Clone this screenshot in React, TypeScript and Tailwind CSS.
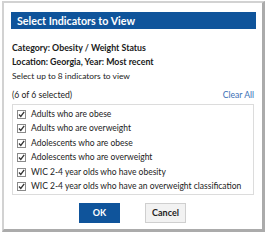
import React from "react"

const items = [
  "Adults who are obese",
  "Adults who are overweight",
  "Adolescents who are obese",
  "Adolescents who are overweight",
  "WIC 2-4 year olds who have obesity",
  "WIC 2-4 year olds who have an overweight classification",
]

function Check() {
  return (
    <svg width="9" height="9" viewBox="0 0 9 9" className="shrink-0">
      <rect x="0.5" y="0.5" width="8" height="8" fill="#fff" stroke="#8a8a8a" />
      <path d="M2 4.5 L3.8 6.5 L7.2 1.8" fill="none" stroke="#333" strokeWidth="1.3" />
    </svg>
  )
}

export default function App() {
  return (
    <div className="w-[269px] h-[236px] bg-white pl-[2px] pt-[1px]" style={{ fontFamily: "Lato, 'Open Sans', sans-serif" }}>
      <div className="w-[263px] h-[231px] border-l-2 border-t-2 border-r-[3px] border-b-[3px] border-l-[#d2d2d2] border-t-[#d2d2d2] border-r-[#ababab] border-b-[#ababab] pt-[9px] pl-[7px] pr-[6px] flex flex-col">
        <div className="h-[17px] bg-[#0f549b] text-white font-bold text-[10.7px] leading-[17px] pl-[6px]">
          Select Indicators to View
        </div>
        <div className="pl-[1px] pr-[2px] text-[#1a1a1a]">
          <div className="mt-[12px] font-bold text-[8.8px] leading-[14px]">Category: Obesity / Weight Status</div>
          <div className="font-bold text-[8.8px] leading-[14px]">Location: Georgia, Year: Most recent</div>
          <div className="text-[8.4px] leading-[15px] text-[#222]">Select up to 8 indicators to view</div>
          <div className="mt-[4px] flex justify-between text-[8.6px] leading-[14px]">
            <span>(6 of 6 selected)</span>
            <span className="text-[#3a70b6]">Clear All</span>
          </div>
          <div className="mt-[2px] border border-[#dcdcdc] pl-[4px] pt-[2px] flex flex-col">
            {items.map((t) => (
              <div key={t} className="flex items-center gap-[5px] h-[14.5px] text-[8.5px] text-[#222] whitespace-nowrap">
                <Check />
                <span>{t}</span>
              </div>
            ))}
          </div>
          <div className="mt-[8px] flex justify-center gap-[25px] pr-[1px]">
            <div className="w-[41px] h-[20px] bg-[#0f549b] text-white font-bold text-[9px] flex items-center justify-center">OK</div>
            <div className="w-[41px] h-[20px] bg-[#f2f2f2] border border-[#cfcfcf] text-[#222] font-bold text-[9px] flex items-center justify-center">Cancel</div>
          </div>
        </div>
      </div>
    </div>
  )
}
